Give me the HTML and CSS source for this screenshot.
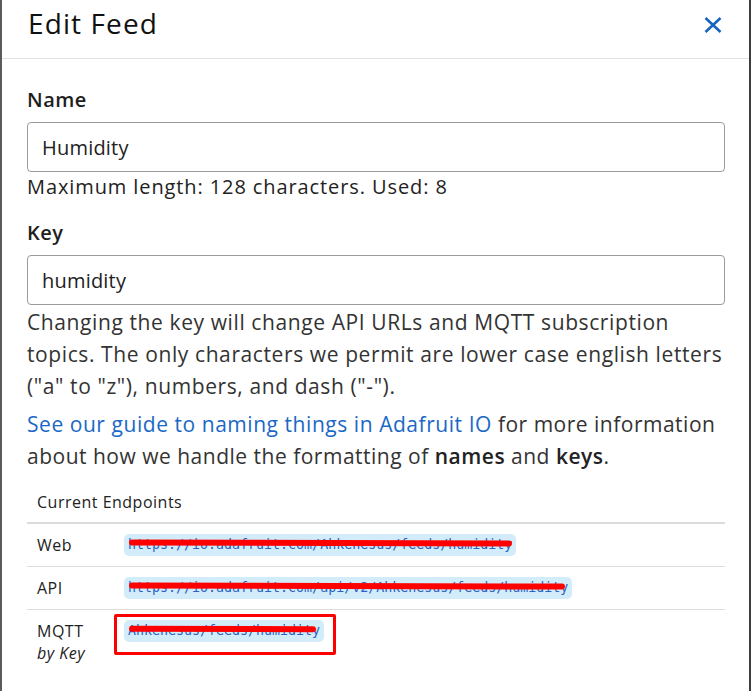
FILE: index.html
```html
<!DOCTYPE html>
<html>
<head>
<meta charset="utf-8">
<link rel="stylesheet" href="styles.css">
</head>
<body>
<div class="modal">
  <div class="modal-header">
    <h2 class="title">Edit Feed</h2>
    <button class="close" aria-label="Close">
      <svg width="18" height="16" viewBox="0 0 18 16"><path d="M1.5 1 L16.5 15 M16.5 1 L1.5 15" stroke="#1565c0" stroke-width="2.6" fill="none"/></svg>
    </button>
  </div>
  <div class="modal-body">
    <label class="label">Name</label>
    <input class="input" type="text" value="Humidity">
    <div class="help">Maximum length: 128 characters. Used: 8</div>

    <label class="label label-key">Key</label>
    <input class="input" type="text" value="humidity">
    <p class="text">Changing the key will change API URLs and MQTT subscription<br>topics. The only characters we permit are lower case english letters<br>("a" to "z"), numbers, and dash ("-").</p>
    <p class="text text-link"><a class="link" href="#">See our guide to naming things in Adafruit IO</a> for more information<br>about how we handle the formatting of <b>names</b> and <b>keys</b>.</p>

    <table class="endpoints">
      <thead>
        <tr><th colspan="2">Current Endpoints</th></tr>
      </thead>
      <tbody>
        <tr>
          <td class="name">Web</td>
          <td><code class="chip strike strike-web">https://io.adafruit.com/Ahkenesus/feeds/humidity</code></td>
        </tr>
        <tr>
          <td class="name">API</td>
          <td><code class="chip strike strike-api">https://io.adafruit.com/api/v2/Ahkenesus/feeds/humidity</code></td>
        </tr>
        <tr>
          <td class="name">MQTT<br><i>by Key</i></td>
          <td class="mqtt-cell"><span class="redbox"></span><code class="chip strike strike-mqtt">Ahkenesus/feeds/humidity</code></td>
        </tr>
      </tbody>
    </table>
  </div>
</div>
</body>
</html>
```
FILE: styles.css
```css
html, body {
  margin: 0;
  padding: 0;
  background: #ffffff;
}
body {
  font-family: "Open Sans", "Liberation Sans", sans-serif;
  color: #333333;
  width: 751px;
  height: 691px;
  overflow: hidden;
}
.modal {
  box-sizing: border-box;
  width: 751px;
  height: 691px;
  border-left: 2px solid #5b5b5b;
  border-right: 2px solid #3d3d3d;
  background: #fff;
}
.modal-header {
  height: 58px;
  border-bottom: 1px solid #e3e3e3;
  display: flex;
  align-items: center;
  justify-content: space-between;
  padding: 0 25px 0 26px;
  box-sizing: content-box;
}
.title {
  margin: 0;
  font-size: 28px;
  font-weight: 500;
  letter-spacing: 1.1px;
  color: #111;
  line-height: 46px;
  margin-top: -13px;
}
.close {
  border: 0;
  background: transparent;
  padding: 0;
  width: 18px;
  height: 16px;
  margin-top: -8px;
  margin-right: 2px;
  display: flex;
}
.modal-body {
  padding: 29px 25px 0 25px;
}
.label {
  display: block;
  font-size: 20px;
  font-weight: 600;
  letter-spacing: 0.5px;
  color: #1e1e1e;
  line-height: 24px;
  margin-bottom: 10px;
}
.label-key {
  margin-top: 19px;
}
.input {
  display: block;
  box-sizing: border-box;
  width: 698px;
  height: 50px;
  border: 1px solid #9a9a9a;
  border-radius: 4px;
  padding: 0 14px;
  font-family: inherit;
  font-size: 20px;
  letter-spacing: 0.2px;
  color: #222;
  outline: none;
}
.help {
  font-size: 20px;
  line-height: 30px;
  letter-spacing: 0.9px;
  color: #222;
}
.text {
  margin: 0;
  font-size: 21px;
  line-height: 32px;
  letter-spacing: 0.6px;
  color: #333;
  white-space: nowrap;
}
.text:first-of-type {
  margin-top: 1px;
}
.text-link {
  margin-top: 6px;
  letter-spacing: 0.5px;
}
.text b {
  font-weight: 600;
  color: #222;
}
.link {
  color: #1a68c6;
  text-decoration: none;
  letter-spacing: 0.55px;
}
.endpoints {
  width: 698px;
  margin-top: 8px;
  border-collapse: collapse;
  font-size: 16px;
  letter-spacing: 0.5px;
  color: #222;
}
.endpoints th {
  text-align: left;
  font-weight: 400;
  padding: 10px 10px 8px;
  line-height: 24px;
  border-bottom: 2px solid #dcdcdc;
}
.endpoints td {
  padding: 10px 10px 10px;
  border-bottom: 1px solid #dcdcdc;
  line-height: 22px;
  vertical-align: top;
}
.endpoints tr:last-child td {
  border-bottom: 0;
}
.endpoints td.name {
  width: 67px;
}
.endpoints i {
  font-style: italic;
}
.chip {
  display: inline-block;
  vertical-align: top;
  position: relative;
  font-family: "DejaVu Sans Mono", "Liberation Mono", monospace;
  font-size: 13.3px;
  letter-spacing: 0;
  line-height: 18px;
  color: #2a63c4;
  background: #d2edf9;
  border-radius: 5px;
  padding: 2px 4px;
}
.strike::after {
  content: "";
  position: absolute;
  left: 5px;
  top: 6px;
  height: 6px;
  background: #ff0000;
  border-radius: 3px;
  transform: rotate(0.15deg);
}
.strike-web::after { right: 4px; }
.strike-api::after { right: 7px; }
.strike-mqtt::after { right: 8px; }
.mqtt-cell {
  position: relative;
}
.redbox {
  position: absolute;
  left: 0;
  top: 4px;
  width: 216px;
  height: 35px;
  border: 3px solid #ff0000;
  border-radius: 2px;
}
```
